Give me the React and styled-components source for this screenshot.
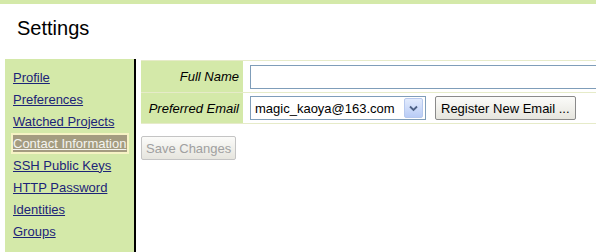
import React from 'react'
import styled, { createGlobalStyle } from 'styled-components'

const green = '#d4e9a9'

const GlobalStyle = createGlobalStyle`
  body {
    margin: 0;
    background: #fff;
    font-family: 'Liberation Sans', Arial, sans-serif;
    font-size: 13px;
    overflow: hidden;
  }
`

const TopBar = styled.div`
  height: 4px;
  background: ${green};
`

const Title = styled.h1`
  margin: 0;
  height: 55px;
  padding-left: 17px;
  font-size: 20px;
  font-weight: normal;
  line-height: 48px;
  color: #000;
`

const Body = styled.div`
  display: flex;
  flex-direction: row;
  align-items: flex-start;
`

const Sidebar = styled.ul`
  flex-shrink: 0;
  list-style: none;
  margin: 0 0 0 5px;
  padding: 7px 0 0 6px;
  width: 123px;
  height: 186px;
  background: ${green};
  border-right: 2px solid #000;
`

const NavItem = styled.li`
  height: 22px;
  display: flex;
  align-items: center;
`

const NavLink = styled.a`
  display: inline-block;
  padding: 1px 1px 1px 0;
  border: 2px solid ${p => (p.$active ? '#f6f3c4' : 'transparent')};
  background: ${p => (p.$active ? '#a49c80' : 'transparent')};
  color: ${p => (p.$active ? '#f4f4f0' : '#1c2478')};
  text-decoration: underline;
  white-space: nowrap;
  cursor: pointer;
`

const Main = styled.div`
  margin-left: 5px;
  padding-top: 1px;
  display: flex;
  flex-direction: column;
  flex: 1;
  min-width: 0;
  overflow: hidden;
`

const Table = styled.div`
  display: flex;
  flex-direction: column;
  border-top: 1px solid #e6ebc9;
`

const Row = styled.div`
  display: flex;
  flex-direction: row;
  height: ${p => p.$h}px;
  border-bottom: 1px solid #e6ebc9;
`

const Label = styled.div`
  flex-shrink: 0;
  width: 98px;
  padding-right: 4px;
  background: ${green};
  font-style: italic;
  text-align: right;
  display: flex;
  align-items: center;
  justify-content: flex-end;
  white-space: nowrap;
`

const Cell = styled.div`
  flex-shrink: 0;
  padding-left: 7px;
  display: flex;
  align-items: center;
  gap: 9px;
`

const TextInput = styled.input`
  box-sizing: border-box;
  width: 352px;
  height: 24px;
  border: 1px solid #7f9db9;
  font: inherit;
  padding: 0 4px;
`

const SelectBox = styled.div`
  box-sizing: border-box;
  width: 176px;
  height: 24px;
  border: 1px solid #7f9db9;
  display: flex;
  align-items: center;
  justify-content: space-between;
  padding: 0 2px 0 4px;
`

const ArrowButton = styled.span`
  width: 17px;
  height: 18px;
  border: 1px solid #b7c9ee;
  border-radius: 2px;
  background: linear-gradient(#e2ebfd, #b9ccf6);
  display: flex;
  align-items: center;
  justify-content: center;
`

const Button = styled.button`
  box-sizing: border-box;
  height: 24px;
  padding: 0 ${p => p.$px}px;
  font: inherit;
  color: ${p => (p.disabled ? '#a0a0a0' : '#000')};
  border: 1px solid ${p => (p.disabled ? '#c4c4c4' : '#8a8a8a')};
  border-radius: 2px;
  background: linear-gradient(#fbfbf9, #e6e5de);
  white-space: nowrap;
`

const Actions = styled.div`
  padding-top: 12px;
`

const navItems = [
  'Profile',
  'Preferences',
  'Watched Projects',
  'Contact Information',
  'SSH Public Keys',
  'HTTP Password',
  'Identities',
  'Groups'
]

export default function App () {
  return (
    <>
      <GlobalStyle />
      <TopBar />
      <Title>Settings</Title>
      <Body>
        <Sidebar>
          {navItems.map(item => (
            <NavItem key={item}>
              <NavLink $active={item === 'Contact Information'}>{item}</NavLink>
            </NavItem>
          ))}
        </Sidebar>
        <Main>
          <Table>
            <Row $h={31}>
              <Label>Full Name</Label>
              <Cell>
                <TextInput type='text' />
              </Cell>
            </Row>
            <Row $h={30}>
              <Label>Preferred Email</Label>
              <Cell>
                <SelectBox>
                  <span>magic_kaoya@163.com</span>
                  <ArrowButton>
                    <svg width='9' height='7' viewBox='0 0 9 7'>
                      <path d='M1 1.5 L4.5 5 L8 1.5' fill='none' stroke='#4d6185' strokeWidth='1.8' />
                    </svg>
                  </ArrowButton>
                </SelectBox>
                <Button $px={5}>Register New Email ...</Button>
              </Cell>
            </Row>
          </Table>
          <Actions>
            <Button $px={4} disabled>Save Changes</Button>
          </Actions>
        </Main>
      </Body>
    </>
  )
}
